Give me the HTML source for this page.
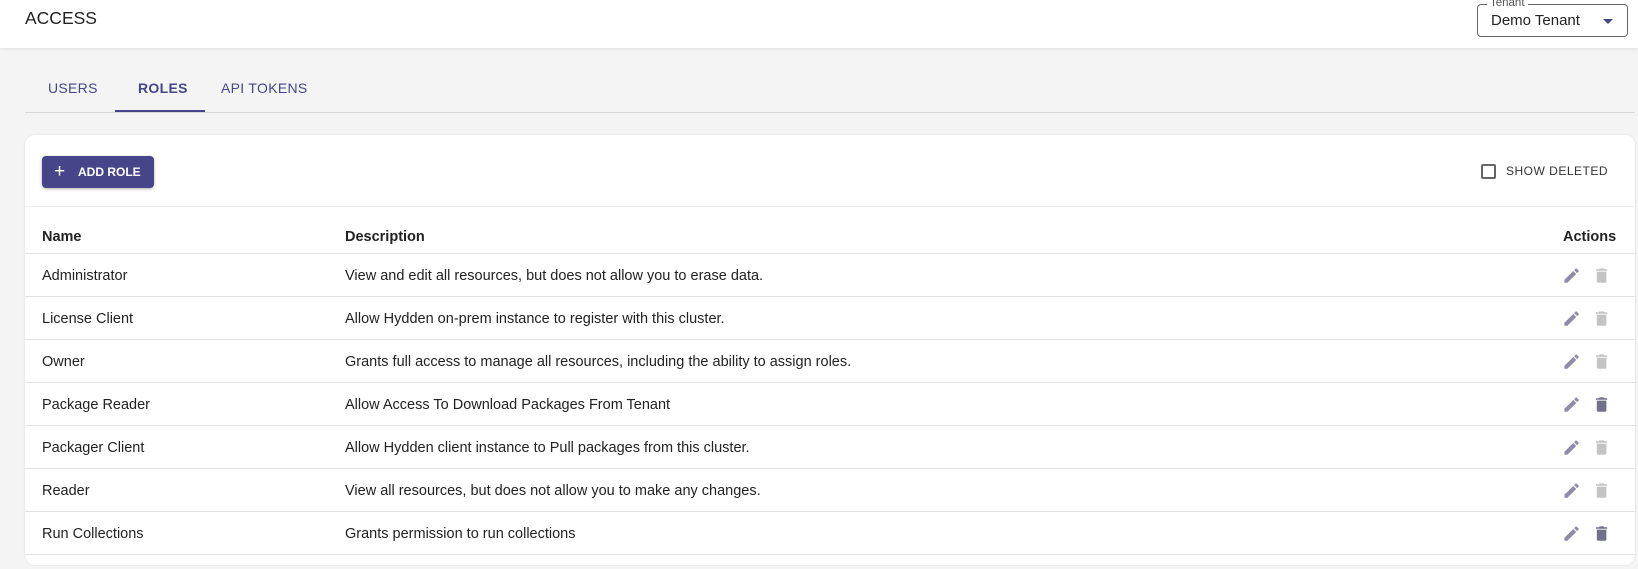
<!DOCTYPE html>
<html><head><style>
*{box-sizing:border-box;margin:0;padding:0}
body{width:1638px;height:569px;background:#f4f4f4;font-family:"Liberation Sans",sans-serif;overflow:hidden;position:relative;color:#222}
.hdr{position:absolute;left:0;top:0;width:1638px;height:48px;background:#fff;box-shadow:0 1px 4px rgba(0,0,0,.08)}
.hdr h1{position:absolute;left:25px;top:8px;font-size:17.5px;font-weight:normal;color:#222}
.sel{position:absolute;left:1477px;top:4px;width:151px;height:33px;border:1px solid #666;border-radius:4px}
.sel .lb{position:absolute;left:9px;top:-8px;background:#fff;padding:0 3px;font-size:11.5px;color:#555;line-height:12px}
.sel .v{position:absolute;left:13px;top:7px;font-size:15px;color:#222}
.sel .ar{position:absolute;left:125px;top:14px;border-left:5px solid transparent;border-right:5px solid transparent;border-top:5px solid #46458a}
.tabs{position:absolute;left:25px;top:73px;width:1610px;height:40px;border-bottom:1px solid #d8d8d8}
.tab{position:absolute;top:7px;font-size:14px;color:#46458a;letter-spacing:.3px}
.ul{position:absolute;left:90px;top:37px;width:90px;height:2px;background:#46458a}
.card{position:absolute;left:25px;top:135px;width:1610px;height:430px;background:#fff;border-radius:10px;box-shadow:0 0 2px rgba(0,0,0,.1)}
.btn{position:absolute;left:17px;top:21px;width:112px;height:32px;background:#46458a;border-radius:4px;color:#fff;font-size:12px;font-weight:bold;box-shadow:0 1px 3px rgba(0,0,0,.3)}
.btn span{position:absolute;left:12px;top:5px;font-size:19px;font-weight:normal}
.btn b{position:absolute;left:36px;top:9px}
.cb{position:absolute;left:1456px;top:29px;width:15px;height:15px;border:2px solid #666;border-radius:2px}
.sd{position:absolute;left:1481px;top:29px;font-size:12px;color:#333;letter-spacing:.5px}
.tb{position:absolute;left:0;top:71px;width:1610px;border-top:1px solid #eee}
.row{position:absolute;left:0;width:1610px;height:43px;border-bottom:1px solid #e2e2e2;font-size:14.5px;color:#222}
.row div{position:absolute;top:14px}
.c1{left:17px}.c2{left:320px}
.th{font-weight:bold}
.th div{top:17px}
</style></head><body>
<div class="hdr"><h1>ACCESS</h1>
<div class="sel"><div class="lb">Tenant</div><div class="v">Demo Tenant</div><div class="ar"></div></div></div>
<div class="tabs"><div class="tab" style="left:23px">USERS</div><div class="tab" style="left:113px;font-weight:bold">ROLES</div><div class="tab" style="left:196px">API TOKENS</div><div class="ul"></div></div>
<div class="card">
<div class="btn"><span>+</span><b>ADD ROLE</b></div>
<div class="cb"></div><div class="sd">SHOW DELETED</div>
<div class="tb"></div>
<div class="row th" style="top:77px;height:42px"><div class="c1">Name</div><div class="c2">Description</div><div style="left:1538px">Actions</div></div>
<div style="position:absolute;left:0;top:119px">
<div class="row" style="top:0"><div class="c1">Administrator</div><div class="c2">View and edit all resources, but does not allow you to erase data.</div></div>
<div class="row" style="top:43px"><div class="c1">License Client</div><div class="c2">Allow Hydden on-prem instance to register with this cluster.</div></div>
<div class="row" style="top:86px"><div class="c1">Owner</div><div class="c2">Grants full access to manage all resources, including the ability to assign roles.</div></div>
<div class="row" style="top:129px"><div class="c1">Package Reader</div><div class="c2">Allow Access To Download Packages From Tenant</div></div>
<div class="row" style="top:172px"><div class="c1">Packager Client</div><div class="c2">Allow Hydden client instance to Pull packages from this cluster.</div></div>
<div class="row" style="top:215px"><div class="c1">Reader</div><div class="c2">View all resources, but does not allow you to make any changes.</div></div>
<div class="row" style="top:258px"><div class="c1">Run Collections</div><div class="c2">Grants permission to run collections</div></div>
</div>
<svg style="position:absolute;left:0;top:119px" width="1610" height="302">
<defs>
<path id="p" d="M3 17.25V21h3.75L17.81 9.94l-3.75-3.75L3 17.25zM20.71 7.04a1 1 0 000-1.41l-2.34-2.34a1 1 0 00-1.41 0l-1.83 1.83 3.75 3.75 1.83-1.83z"/>
<path id="t" d="M6 19c0 1.1.9 2 2 2h8c1.1 0 2-.9 2-2V7H6v12zM19 4h-3.5l-1-1h-5l-1 1H5v2h14V4z"/>
</defs>
<g fill="#8e8ca8">
<use href="#p" transform="translate(1537,12) scale(.8)"/><use href="#p" transform="translate(1537,55) scale(.8)"/><use href="#p" transform="translate(1537,98) scale(.8)"/><use href="#p" transform="translate(1537,141) scale(.8)"/><use href="#p" transform="translate(1537,184) scale(.8)"/><use href="#p" transform="translate(1537,227) scale(.8)"/><use href="#p" transform="translate(1537,270) scale(.8)"/>
</g>
<g fill="#c4c4c4">
<use href="#t" transform="translate(1567,12) scale(.8)"/><use href="#t" transform="translate(1567,55) scale(.8)"/><use href="#t" transform="translate(1567,98) scale(.8)"/><use href="#t" transform="translate(1567,184) scale(.8)"/><use href="#t" transform="translate(1567,227) scale(.8)"/>
</g>
<g fill="#72718a">
<use href="#t" transform="translate(1567,141) scale(.8)"/><use href="#t" transform="translate(1567,270) scale(.8)"/>
</g>
</svg>
</div>
</body></html>
